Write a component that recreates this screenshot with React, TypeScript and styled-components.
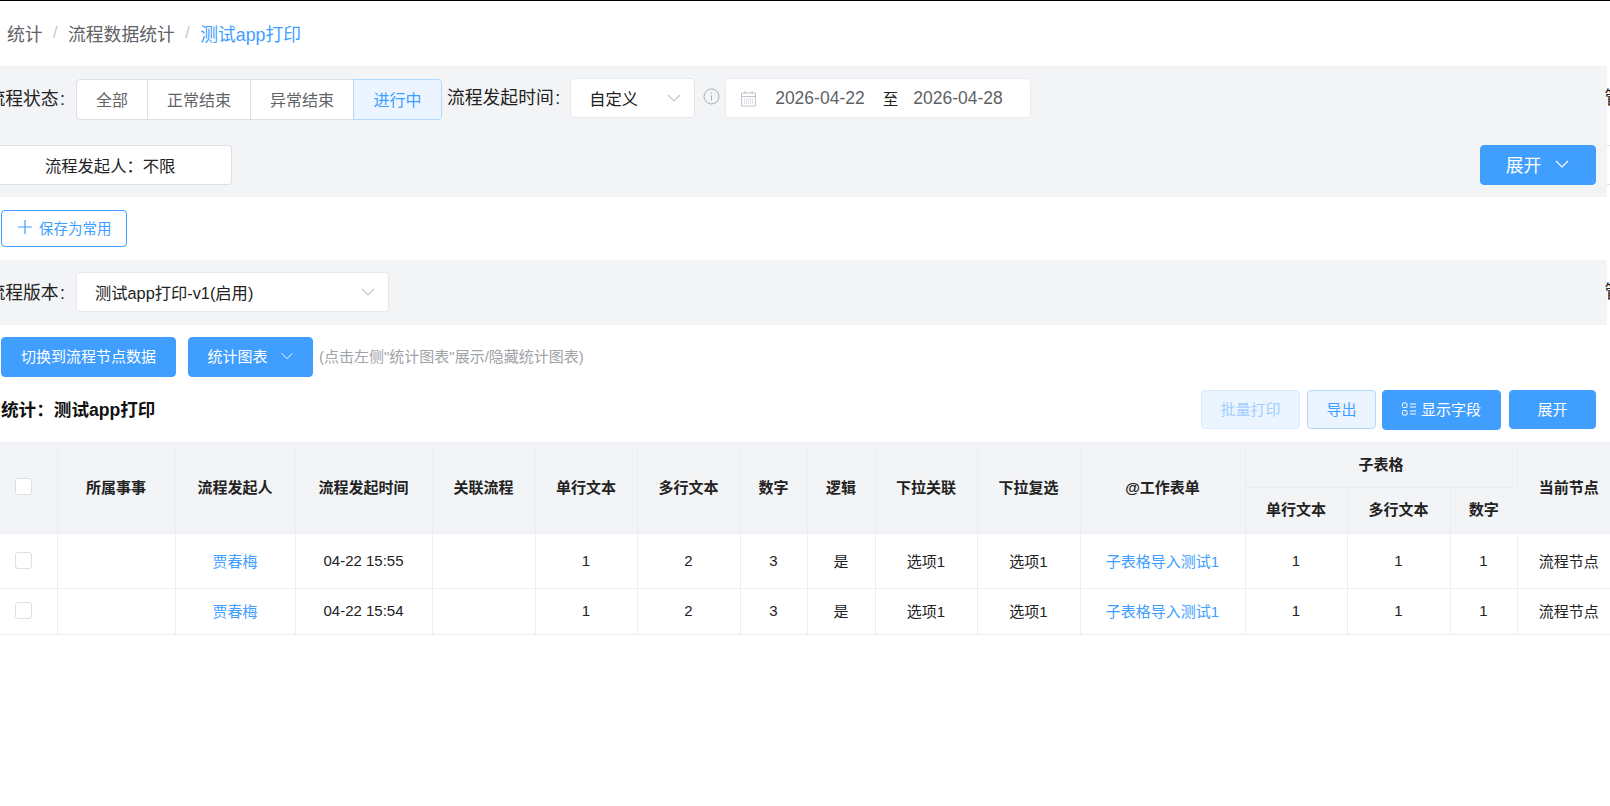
import React from 'react'
import styled, { createGlobalStyle } from 'styled-components'

const GlobalStyle = createGlobalStyle`
  html, body {
    margin: 0;
    padding: 0;
    background: #fff;
    overflow: hidden;
  }
  body {
    font-family: "Liberation Sans", "Noto Sans CJK SC", sans-serif;
    color: #222;
  }
`

const Page = styled.div`
  width: 1610px;
  height: 806px;
  overflow: hidden;
  border-top: 1px solid #000;
  box-sizing: border-box;
`

const Breadcrumb = styled.nav`
  height: 65px;
  padding: 0 0 1px 7px;
  box-sizing: border-box;
  display: flex;
  align-items: center;
  font-size: 17.8px;
  color: #606266;
`

const Crumb = styled.span<{ $current?: boolean }>`
  color: ${(p) => (p.$current ? '#409eff' : '#606266')};
`

const Slash = styled.span`
  margin: 0 10.5px;
  color: #c0c4cc;
  font-size: 16px;
`

const Band = styled.section`
  width: 1607px;
  background: #f3f4f6;
`

const FilterBand = styled(Band)`
  height: 131px;
  padding-top: 12px;
  box-sizing: border-box;
`

const VersionBand = styled(Band)`
  height: 65px;
  padding-top: 12px;
  box-sizing: border-box;
`

const FilterRow = styled.div<{ $gap?: number }>`
  display: flex;
  align-items: flex-start;
  height: 40px;
  margin-bottom: ${(p) => p.$gap ?? 0}px;
`

const Label = styled.span`
  flex: none;
  font-size: 17.8px;
  line-height: 40px;
  color: #222;
  white-space: nowrap;
`

const Colon = styled.span`
  margin-left: 1.5px;
`

const ClippedLabel = styled(Label)`
  width: 65px;
  margin-right: 11px;
  line-height: 42px;
  display: flex;
  justify-content: flex-end;
`

const Segments = styled.div`
  display: flex;
  flex: none;
  height: 41px;
  margin: 1px 5px 0 0;
`

const Segment = styled.div<{ $width: number; $active?: boolean }>`
  width: ${(p) => p.$width}px;
  box-sizing: border-box;
  padding-bottom: 2px;
  display: flex;
  align-items: center;
  justify-content: center;
  font-size: 16px;
  margin-left: -1px;
  background: ${(p) => (p.$active ? '#ecf5ff' : '#fff')};
  color: ${(p) => (p.$active ? '#409eff' : '#606266')};
  border: 1px solid ${(p) => (p.$active ? '#b3d8ff' : '#dcdfe6')};
  &:first-child {
    margin-left: 0;
    border-radius: 4px 0 0 4px;
  }
  &:last-child {
    border-radius: 0 4px 4px 0;
  }
`

const Select = styled.div<{ $width: number; $offset?: number }>`
  width: ${(p) => p.$width}px;
  height: 40px;
  flex: none;
  margin-left: ${(p) => p.$offset ?? 0}px;
  box-sizing: border-box;
  background: #fff;
  border: 1px solid #e4e7ed;
  border-radius: 4px;
  display: flex;
  align-items: center;
  justify-content: space-between;
  padding: 0 12px 1px 18px;
  font-size: 16.3px;
  color: #222;
`

const InfoIcon = styled.svg`
  flex: none;
  width: 17px;
  height: 17px;
  margin: 10px 5px 0 8px;
`

const DateRange = styled.div`
  width: 306px;
  height: 40px;
  flex: none;
  box-sizing: border-box;
  background: #fff;
  border: 1px solid #e9ebf0;
  border-radius: 4px;
  display: flex;
  align-items: center;
  padding-left: 14px;
`

const DateText = styled.span`
  font-size: 17.5px;
  color: #606266;
`

const DateSeparator = styled.span`
  font-size: 15.5px;
  color: #222;
  margin: 0 15px 0 18px;
`

const CalendarIcon = styled.svg`
  width: 17px;
  height: 17px;
  margin-right: 18px;
  flex: none;
`

const EdgeLabel = styled(Label)`
  margin-left: auto;
  margin-right: -15.5px;
  width: 18px;
  overflow: hidden;
`

const PersonFilter = styled.div`
  width: 232px;
  height: 40px;
  flex: none;
  margin-top: 1px;
  box-sizing: border-box;
  background: #fff;
  border: 1px solid #dcdfe6;
  border-left: none;
  border-radius: 0 4px 4px 0;
  display: flex;
  align-items: center;
  padding-left: 45px;
  font-size: 16.3px;
  color: #222;
`

const Button = styled.button<{ $width: number; $height?: number; $size?: number; $gap?: number }>`
  width: ${(p) => p.$width}px;
  height: ${(p) => p.$height ?? 40}px;
  flex: none;
  box-sizing: border-box;
  padding: 0 0 3px;
  background: #409eff;
  border: 1px solid #409eff;
  border-radius: 4px;
  color: #fff;
  font-family: inherit;
  font-size: ${(p) => p.$size ?? 15}px;
  display: flex;
  align-items: center;
  justify-content: center;
  gap: ${(p) => p.$gap ?? 0}px;
`

const ExpandButton = styled(Button)`
  margin-left: auto;
  margin-top: 1px;
`

const EdgeBox = styled.div`
  width: 3px;
  height: 40px;
  flex: none;
  margin: 1px -3px 0 11px;
  box-sizing: border-box;
  background: #fff;
  border: 1px solid #dcdfe6;
  border-width: 1px 0;
`

const SaveRow = styled.div`
  height: 63px;
  padding: 13px 0 0 1px;
  box-sizing: border-box;
`

const SaveButton = styled.button`
  width: 126px;
  height: 37px;
  box-sizing: border-box;
  padding: 0 0 3px 16px;
  background: #fff;
  border: 1px solid #409eff;
  border-radius: 4px;
  color: #409eff;
  font-family: inherit;
  font-size: 14.5px;
  display: flex;
  align-items: center;
  gap: 7px;
`

const ActionRow = styled.div`
  display: flex;
  align-items: center;
  gap: 12px;
  padding: 12px 0 0 1px;
`

const Hint = styled.span`
  font-size: 15px;
  color: #a0a3a8;
  margin-left: -6px;
  padding-bottom: 3px;
  white-space: nowrap;
`

const TitleRow = styled.div`
  display: flex;
  align-items: flex-start;
  justify-content: space-between;
  width: 1596px;
  height: 40px;
  margin: 13px 0 12px;
  padding-left: 1px;
  box-sizing: border-box;
`

const Title = styled.h2`
  margin: 0;
  font-size: 17.6px;
  font-weight: 700;
  line-height: 41px;
  color: #111;
`

const Tools = styled.div`
  display: flex;
  gap: 6px;
`

const PaleButton = styled(Button)<{ $disabled?: boolean }>`
  margin-right: ${(p) => (p.$disabled ? 1 : 0)}px;
  background: #ecf5ff;
  border-color: ${(p) => (p.$disabled ? '#d9ecff' : '#b3d8ff')};
  color: ${(p) => (p.$disabled ? '#a0cfff' : '#409eff')};
`

const WideGapButton = styled(Button)`
  margin-left: 2px;
`

const Table = styled.table`
  width: 1620px;
  table-layout: fixed;
  border-collapse: collapse;
  font-size: 15px;
  color: #222;
`

const Col = styled.col<{ $width: number }>`
  width: ${(p) => p.$width}px;
`

const HeadRow = styled.tr<{ $height: number }>`
  height: ${(p) => p.$height}px;
`

const HeadCell = styled.th`
  padding: 0 0 4px;
  background: #f3f4f6;
  border: 1px solid #ebeef5;
  border-left: none;
  font-weight: 700;
  text-align: center;
  color: #222;
  &:last-child {
    border-right: none;
  }
`

const BodyRow = styled.tr<{ $height: number }>`
  height: ${(p) => p.$height}px;
`

const BodyCell = styled.td`
  padding: 0 0 2px;
  border-bottom: 1px solid #ebeef5;
  border-right: 1px solid #ebeef5;
  text-align: center;
  white-space: nowrap;
  &:last-child {
    border-right: none;
  }
`

const Link = styled.span`
  color: #409eff;
`

const Check = styled.input.attrs({ type: 'checkbox' })`
  appearance: none;
  display: block;
  width: 17px;
  height: 17px;
  margin: 0 0 0 15px;
  background: #fff;
  border: 1px solid #dcdfe6;
  border-radius: 3px;
`

const Chevron: React.FC<{ color: string; size?: number }> = ({ color, size = 16 }) => (
  <svg width={size} height={size} viewBox='0 0 16 16' fill='none'>
    <path d='M2 5l6 6 6-6' stroke={color} strokeWidth='1.1' />
  </svg>
)

const columns = [57, 118, 120, 137, 103, 102, 103, 67, 68, 102, 103, 165, 102, 103, 67, 103]

const rows = [
  { height: 55, time: '04-22 15:55' },
  { height: 46, time: '04-22 15:54' }
]

const App: React.FC = () => {
  return (
    <Page>
      <GlobalStyle />
      <Breadcrumb>
        <Crumb>统计</Crumb>
        <Slash>/</Slash>
        <Crumb>流程数据统计</Crumb>
        <Slash>/</Slash>
        <Crumb $current>测试app打印</Crumb>
      </Breadcrumb>

      <FilterBand>
        <FilterRow $gap={26}>
          <ClippedLabel>流程状态<Colon>:</Colon></ClippedLabel>
          <Segments>
            <Segment $width={72}>全部</Segment>
            <Segment $width={104}>正常结束</Segment>
            <Segment $width={104}>异常结束</Segment>
            <Segment $width={89} $active>进行中</Segment>
          </Segments>
          <Label>流程发起时间<Colon>:</Colon></Label>
          <Select $width={125} $offset={10}>
            自定义
            <Chevron color='#c0c4cc' />
          </Select>
          <InfoIcon viewBox='0 0 17 17' fill='none'>
            <circle cx='8.5' cy='8.5' r='7.5' stroke='#a8abb2' />
            <path d='M8.5 7.5v5M8.5 4.5v1.2' stroke='#a8abb2' />
          </InfoIcon>
          <DateRange>
            <CalendarIcon viewBox='0 0 17 17' fill='none'>
              <path d='M1.5 3h14v13h-14zM1.5 6.5h14M5 1v3M12 1v3' stroke='#c0c4cc' />
              <path d='M4 9h9M4 11h9M4 13h9' stroke='#c0c4cc' strokeDasharray='1 1' />
            </CalendarIcon>
            <DateText>2026-04-22</DateText>
            <DateSeparator>至</DateSeparator>
            <DateText>2026-04-28</DateText>
          </DateRange>
          <EdgeLabel>管</EdgeLabel>
        </FilterRow>
        <FilterRow>
          <PersonFilter>{'流程发起人\uFF1A不限'}</PersonFilter>
          <ExpandButton $width={116} $size={17.8} $gap={13}>
            展开
            <Chevron color='#fff' />
          </ExpandButton>
          <EdgeBox />
        </FilterRow>
      </FilterBand>

      <SaveRow>
        <SaveButton>
          <svg width='14' height='14' viewBox='0 0 14 14' fill='none'>
            <path d='M7 0v14M0 7h14' stroke='#409eff' strokeWidth='1.2' />
          </svg>
          保存为常用
        </SaveButton>
      </SaveRow>

      <VersionBand>
        <FilterRow>
          <ClippedLabel>流程版本<Colon>:</Colon></ClippedLabel>
          <Select $width={313}>
            测试app打印-v1(启用)
            <Chevron color='#c0c4cc' />
          </Select>
          <EdgeLabel>管</EdgeLabel>
        </FilterRow>
      </VersionBand>

      <ActionRow>
        <Button $width={175}>切换到流程节点数据</Button>
        <Button $width={125} $gap={12}>
          统计图表
          <Chevron color='#fff' size={14} />
        </Button>
        <Hint>(点击左侧"统计图表"展示/隐藏统计图表)</Hint>
      </ActionRow>

      <TitleRow>
        <Title>{'统计\uFF1A测试app打印'}</Title>
        <Tools>
          <PaleButton $width={99} $height={39} $disabled>批量打印</PaleButton>
          <PaleButton $width={69} $height={39}>导出</PaleButton>
          <Button $width={119} $gap={5}>
            <svg width='14' height='14' viewBox='0 0 14 14' fill='none'>
              <rect x='.5' y='1' width='4.5' height='4.5' rx='1' stroke='#fff' />
              <rect x='.5' y='8.5' width='4.5' height='4.5' rx='1' stroke='#fff' />
              <path d='M8 2h6M8 5h6M8 9h6M8 12h6' stroke='#fff' />
            </svg>
            显示字段
          </Button>
          <WideGapButton $width={87} $height={39}>展开</WideGapButton>
        </Tools>
      </TitleRow>

      <Table>
        <colgroup>
          {columns.map((width, i) => (
            <Col key={i} $width={width} />
          ))}
        </colgroup>
        <thead>
          <HeadRow $height={45}>
            <HeadCell rowSpan={2}><Check /></HeadCell>
            <HeadCell rowSpan={2}>所属事事</HeadCell>
            <HeadCell rowSpan={2}>流程发起人</HeadCell>
            <HeadCell rowSpan={2}>流程发起时间</HeadCell>
            <HeadCell rowSpan={2}>关联流程</HeadCell>
            <HeadCell rowSpan={2}>单行文本</HeadCell>
            <HeadCell rowSpan={2}>多行文本</HeadCell>
            <HeadCell rowSpan={2}>数字</HeadCell>
            <HeadCell rowSpan={2}>逻辑</HeadCell>
            <HeadCell rowSpan={2}>下拉关联</HeadCell>
            <HeadCell rowSpan={2}>下拉复选</HeadCell>
            <HeadCell rowSpan={2}>@工作表单</HeadCell>
            <HeadCell colSpan={3}>子表格</HeadCell>
            <HeadCell rowSpan={2}>当前节点</HeadCell>
          </HeadRow>
          <HeadRow $height={46}>
            <HeadCell>单行文本</HeadCell>
            <HeadCell>多行文本</HeadCell>
            <HeadCell>数字</HeadCell>
          </HeadRow>
        </thead>
        <tbody>
          {rows.map((row) => (
            <BodyRow key={row.time} $height={row.height}>
              <BodyCell><Check /></BodyCell>
              <BodyCell />
              <BodyCell><Link>贾春梅</Link></BodyCell>
              <BodyCell>{row.time}</BodyCell>
              <BodyCell />
              <BodyCell>1</BodyCell>
              <BodyCell>2</BodyCell>
              <BodyCell>3</BodyCell>
              <BodyCell>是</BodyCell>
              <BodyCell>选项1</BodyCell>
              <BodyCell>选项1</BodyCell>
              <BodyCell><Link>子表格导入测试1</Link></BodyCell>
              <BodyCell>1</BodyCell>
              <BodyCell>1</BodyCell>
              <BodyCell>1</BodyCell>
              <BodyCell>流程节点</BodyCell>
            </BodyRow>
          ))}
        </tbody>
      </Table>
    </Page>
  )
}

export default App
